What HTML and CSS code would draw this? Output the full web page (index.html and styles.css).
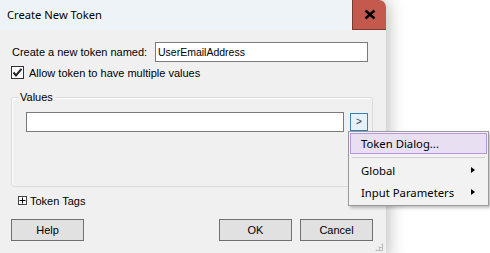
FILE: index.html
```html
<!DOCTYPE html>
<html>
<head>
<meta charset="utf-8">
<link rel="stylesheet" href="styles.css">
</head>
<body>
<div class="dialog">
  <div class="titlebar">
    <span class="title">Create New Token</span>
    <div class="close"><svg width="12" height="11" viewBox="0 0 12 11"><path d="M1.5 1.5 L10.5 9.5 M10.5 1.5 L1.5 9.5" stroke="#000" stroke-width="2.4"/></svg></div>
  </div>
  <div class="content">
    <div class="row name-row">
      <label class="lbl">Create a new token named:</label>
      <div class="textbox name-box">UserEmailAddress</div>
    </div>
    <div class="row check-row">
      <span class="checkbox"><svg width="11" height="11" viewBox="0 0 11 11"><path d="M1.5 5.5 L4 8.5 L9.5 1.8" fill="none" stroke="#222" stroke-width="2"/></svg></span>
      <span class="lbl">Allow token to have multiple values</span>
    </div>
    <div class="group">
      <span class="legend">Values</span>
      <div class="group-row">
        <div class="textbox values-box"></div>
        <div class="arrow-btn">&gt;</div>
      </div>
    </div>
    <div class="row tags-row">
      <span class="plusbox"><svg width="7" height="7" viewBox="0 0 7 7"><path d="M0.5 3.5 H6.5 M3.5 0.5 V6.5" stroke="#000" stroke-width="1"/></svg></span>
      <span class="lbl">Token Tags</span>
    </div>
    <div class="row buttons-row">
      <div class="btn">Help</div>
      <div class="spacer"></div>
      <div class="btn">OK</div>
      <div class="btn">Cancel</div>
    </div>
  </div>
  <div class="grip"></div>
</div>
<div class="menu">
  <div class="item active">Token Dialog...</div>
  <div class="sep"></div>
  <div class="item">Global<span class="tri"></span></div>
  <div class="item">Input Parameters<span class="tri"></span></div>
</div>
</body>
</html>
```
FILE: styles.css
```css
html, body {
  margin: 0;
  padding: 0;
  background: #ffffff;
  width: 490px;
  height: 253px;
  overflow: hidden;
  position: relative;
}
.dialog {
  width: 386px;
  height: 260px;
  background: #f0f0f0;
  border-top-right-radius: 7px;
  box-shadow: 2px 0 18px rgba(0,0,0,0.28);
  position: relative;
  font-family: "Liberation Sans", Arial, sans-serif;
  font-size: 11px;
  color: #000;
}
.titlebar {
  height: 30px;
  background: #eef3f8;
  display: flex;
  justify-content: space-between;
  align-items: flex-start;
  border-top-right-radius: 7px;
}
.title {
  font-family: "Noto Sans", sans-serif;
  font-size: 11.2px;
  padding-left: 7px;
  line-height: 30px;
}
.close {
  width: 33px;
  height: 29px;
  background: #c45a4e;
  border-left: 1px solid #7a3a33;
  border-bottom: 1px solid #7a3a33;
  border-top-right-radius: 7px;
  display: flex;
  align-items: center;
  justify-content: center;
}
.content {
  padding: 0 0 0 11px;
}
.row {
  display: flex;
  align-items: center;
}
.name-row {
  margin-top: 12px;
  height: 19px;
}
.name-row .lbl {
  width: 143px;
  padding-left: 1px;
}
.textbox {
  box-sizing: border-box;
  border: 1px solid #7a7a7a;
  background: #fff;
  height: 20px;
  line-height: 18px;
  padding-left: 2px;
  font-size: 10.5px;
}
.name-box {
  width: 213px;
}
.check-row {
  margin-top: 5px;
  height: 13px;
}
.checkbox {
  box-sizing: border-box;
  width: 13px;
  height: 13px;
  border: 1px solid #333;
  background: #fff;
  display: flex;
  align-items: center;
  justify-content: center;
  margin-right: 5px;
}
.group {
  position: relative;
  box-sizing: border-box;
  width: 362px;
  height: 90px;
  margin-top: 18px;
  border: 1px solid #dcdcdc;
  border-radius: 3px;
  box-shadow: inset 1px 1px 0 #ffffff;
  padding: 14px 0 0 14px;
}
.legend {
  position: absolute;
  top: -8px;
  left: 6px;
  background: #f0f0f0;
  padding: 0 2px;
  line-height: 14px;
}
.group-row {
  display: flex;
  align-items: flex-start;
}
.values-box {
  width: 318px;
}
.arrow-btn {
  box-sizing: border-box;
  margin-left: 6px;
  width: 18px;
  height: 18px;
  margin-top: 1px;
  border: 1px solid #3c7fb1;
  background: #e5f1fb;
  font-size: 10px;
  line-height: 15px;
  text-align: center;
  color: #333;
}
.tags-row {
  margin-top: 7px;
  height: 13px;
  padding-left: 7px;
}
.plusbox {
  box-sizing: border-box;
  width: 9px;
  height: 9px;
  border: 1px solid #444;
  background: #fff;
  display: flex;
  align-items: center;
  justify-content: center;
  margin-right: 3px;
}
.buttons-row {
  margin-top: 12px;
  width: 362px;
}
.spacer {
  flex: 1;
}
.btn {
  box-sizing: border-box;
  width: 73px;
  height: 22px;
  border: 1px solid #707070;
  background: #e1e1e1;
  text-align: center;
  line-height: 20px;
  margin-left: 8px;
}
.btn:first-child {
  margin-left: 0;
}
.grip {
  position: absolute;
  right: 3px;
  top: 243px;
  width: 8px;
  height: 8px;
  background-image: radial-gradient(circle, #bcbcbc 1px, transparent 1.2px);
  background-size: 3px 3px;
  clip-path: polygon(100% 0, 100% 100%, 0 100%);
}
.menu {
  position: absolute;
  left: 348px;
  top: 131px;
  width: 141px;
  box-sizing: border-box;
  background: #f2f2f2;
  border: 1px solid #9a9a9a;
  box-shadow: 2px 2px 3px rgba(0,0,0,0.25);
  padding: 1px;
  font-family: "Noto Sans", sans-serif;
  font-size: 11.3px;
}
.item {
  position: relative;
  height: 22px;
  line-height: 20px;
  padding-left: 10px;
  box-sizing: border-box;
  border: 1px solid transparent;
}
.item.active {
  height: 21px;
  line-height: 19px;
  background: #e8dff2;
  border-color: #b996e0;
}
.sep {
  height: 1px;
  background: #cfcfcf;
  margin: 3px 2px 2px 2px;
}
.tri {
  position: absolute;
  right: 11px;
  top: 6px;
  width: 0;
  height: 0;
  border-top: 3.5px solid transparent;
  border-bottom: 3.5px solid transparent;
  border-left: 4px solid #000;
}
```
